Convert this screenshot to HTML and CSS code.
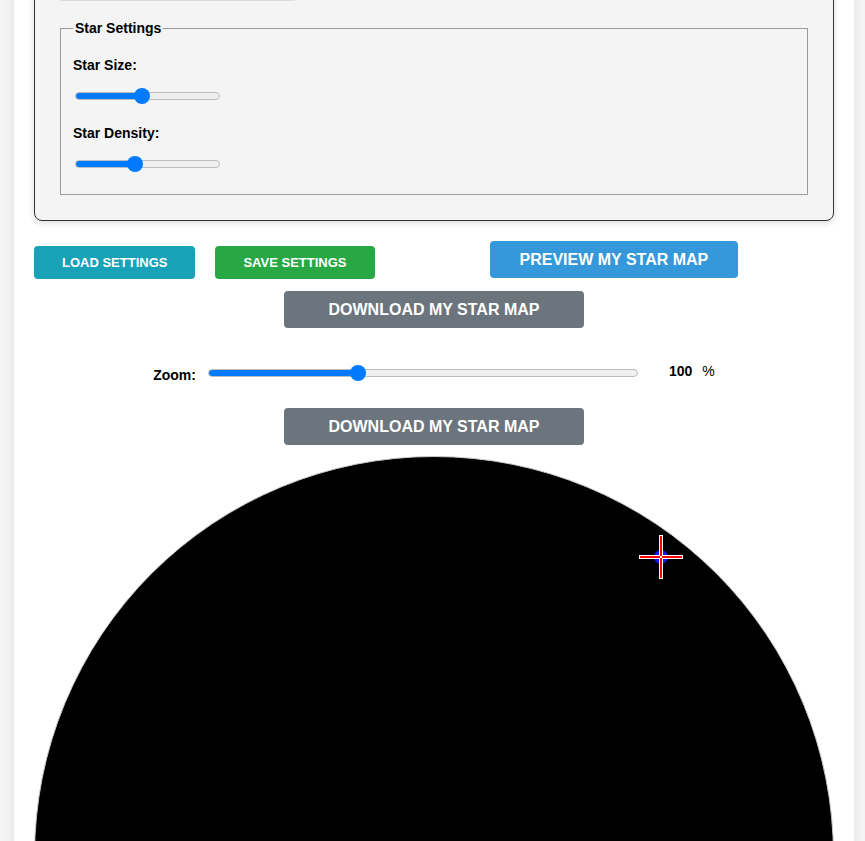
FILE: index.html
```html
<!DOCTYPE html>
<html lang="en">
<head>
<meta charset="utf-8">
<title>Star Map</title>
<link rel="stylesheet" href="styles.css">
</head>
<body>
<div class="container">
  <div class="panel">
    <div class="prev-input"></div>
    <fieldset class="star-settings">
      <legend>Star Settings</legend>
      <div class="group">
        <label class="field-label" for="starSize">Star Size:</label>
        <input type="range" id="starSize" class="slider slider-small" min="0" max="100" value="46" style="--fill:46.4%">
      </div>
      <div class="group">
        <label class="field-label" for="starDensity">Star Density:</label>
        <input type="range" id="starDensity" class="slider slider-small" min="0" max="100" value="40" style="--fill:41%">
      </div>
    </fieldset>
  </div>

  <div class="actions">
    <button class="btn btn-sm btn-load">Load Settings</button>
    <button class="btn btn-sm btn-save">Save Settings</button>
    <button class="btn btn-lg btn-preview">Preview My Star Map</button>
  </div>

  <div class="center-row">
    <button class="btn btn-lg btn-download">Download My Star Map</button>
  </div>

  <div class="zoom-row">
    <label class="zoom-label" for="zoom">Zoom:</label>
    <input type="range" id="zoom" class="slider slider-zoom" min="20" max="253" value="100" style="--fill:34.9%">
    <span class="zoom-value">100</span>
    <span class="zoom-unit">%</span>
  </div>

  <div class="center-row center-row-2">
    <button class="btn btn-lg btn-download">Download My Star Map</button>
  </div>

  <div class="map">
    <div class="sky"></div>
    <svg class="marker" width="46" height="46" viewBox="0 0 46 46">
      <circle cx="23" cy="23" r="7" fill="#1414ff"/>
      <rect x="21" y="1" width="4" height="44" fill="#fff"/>
      <rect x="1" y="21" width="44" height="4" fill="#fff"/>
      <rect x="22" y="2" width="2" height="42" fill="#ff0000"/>
      <rect x="2" y="22" width="42" height="2" fill="#ff0000"/>
      <rect x="22" y="22" width="2" height="2" fill="#fff"/>
    </svg>
  </div>
</div>
</body>
</html>
```

FILE: styles.css
```css
html, body {
  margin: 0;
  padding: 0;
}

body {
  background: #f4f4f4;
  font-family: "Liberation Sans", Arial, sans-serif;
  color: #000;
  padding: 0 11px 0 14px;
}

.container {
  max-width: 800px;
  margin: 0 auto;
  padding: 0 20px 40px;
  background: #fff;
  box-shadow: 0 0 10px rgba(0, 0, 0, 0.08);
}

.panel {
  margin-top: -60px;
  padding: 25px;
  background: #f4f4f4;
  border: 1px solid #333;
  border-radius: 8px;
  box-shadow: 0 2px 6px rgba(0, 0, 0, 0.15);
}

.prev-input {
  width: 235px;
  height: 35px;
  box-sizing: border-box;
  border: 1px solid #dcdcdc;
  background: #f4f4f4;
}

.star-settings {
  margin: 19px 0 0;
  padding: 0 12px 24px;
  border: 1px solid #9a9a9a;
}

.star-settings legend {
  padding: 0 2px;
  font-size: 14px;
  font-weight: bold;
  line-height: 16px;
}

.group {
  margin-top: 21px;
}

.group + .group {
  margin-top: 25px;
}

.field-label {
  display: block;
  font-size: 14px;
  font-weight: bold;
  line-height: 16px;
  margin-bottom: 19px;
}

.slider {
  -webkit-appearance: none;
  appearance: none;
  display: block;
  height: 8px;
  box-sizing: border-box;
  margin: 2px;
  padding: 0;
  border: 1px solid #bdbdbd;
  border-radius: 4px;
  background: linear-gradient(to right, #007bff var(--fill), #efefef var(--fill));
  outline: none;
}

.slider::-webkit-slider-thumb {
  -webkit-appearance: none;
  appearance: none;
  width: 16px;
  height: 16px;
  border-radius: 50%;
  background: #007bff;
  border: none;
}

.slider-small {
  width: 145px;
}

.actions {
  display: flex;
  align-items: flex-start;
  margin-top: 20px;
}

.btn {
  border: none;
  border-radius: 4px;
  color: #fff;
  font-family: "Liberation Sans", Arial, sans-serif;
  font-weight: bold;
  text-transform: uppercase;
  cursor: pointer;
}

.btn-sm {
  font-size: 13px;
  line-height: 15px;
  padding: 9px 28px;
  margin-top: 5px;
}

.btn-lg {
  font-size: 16px;
  line-height: 17px;
  padding: 10px 30px;
}

.btn-load {
  background: #17a2b8;
}

.btn-save {
  background: #28a745;
  margin-left: 20px;
}

.btn-preview {
  background: #3498db;
  margin-left: 115px;
}

.btn-download {
  background: #6c757d;
  width: 300px;
  padding-left: 0;
  padding-right: 0;
}

.center-row {
  display: flex;
  justify-content: center;
  margin-top: 12px;
}

.center-row-2 {
  margin-top: 25px;
}

.zoom-row {
  display: flex;
  align-items: center;
  justify-content: center;
  margin-top: 35px;
  height: 20px;
  font-size: 14px;
  line-height: 16px;
}

.zoom-label {
  font-weight: bold;
  padding-top: 4px;
  margin-right: 10px;
}

.slider-zoom {
  width: 430px;
}

.zoom-value {
  font-weight: bold;
  margin-left: 29px;
  padding-bottom: 4px;
}

.zoom-unit {
  margin-left: 10px;
  padding-bottom: 4px;
}

.map {
  position: relative;
  margin-top: 11px;
  width: 800px;
  height: 800px;
}

.sky {
  width: 800px;
  height: 800px;
  box-sizing: border-box;
  border: 1px solid #c8c8c8;
  border-radius: 50%;
  background: #000;
}

.marker {
  position: absolute;
  left: 604px;
  top: 78px;
}
```
